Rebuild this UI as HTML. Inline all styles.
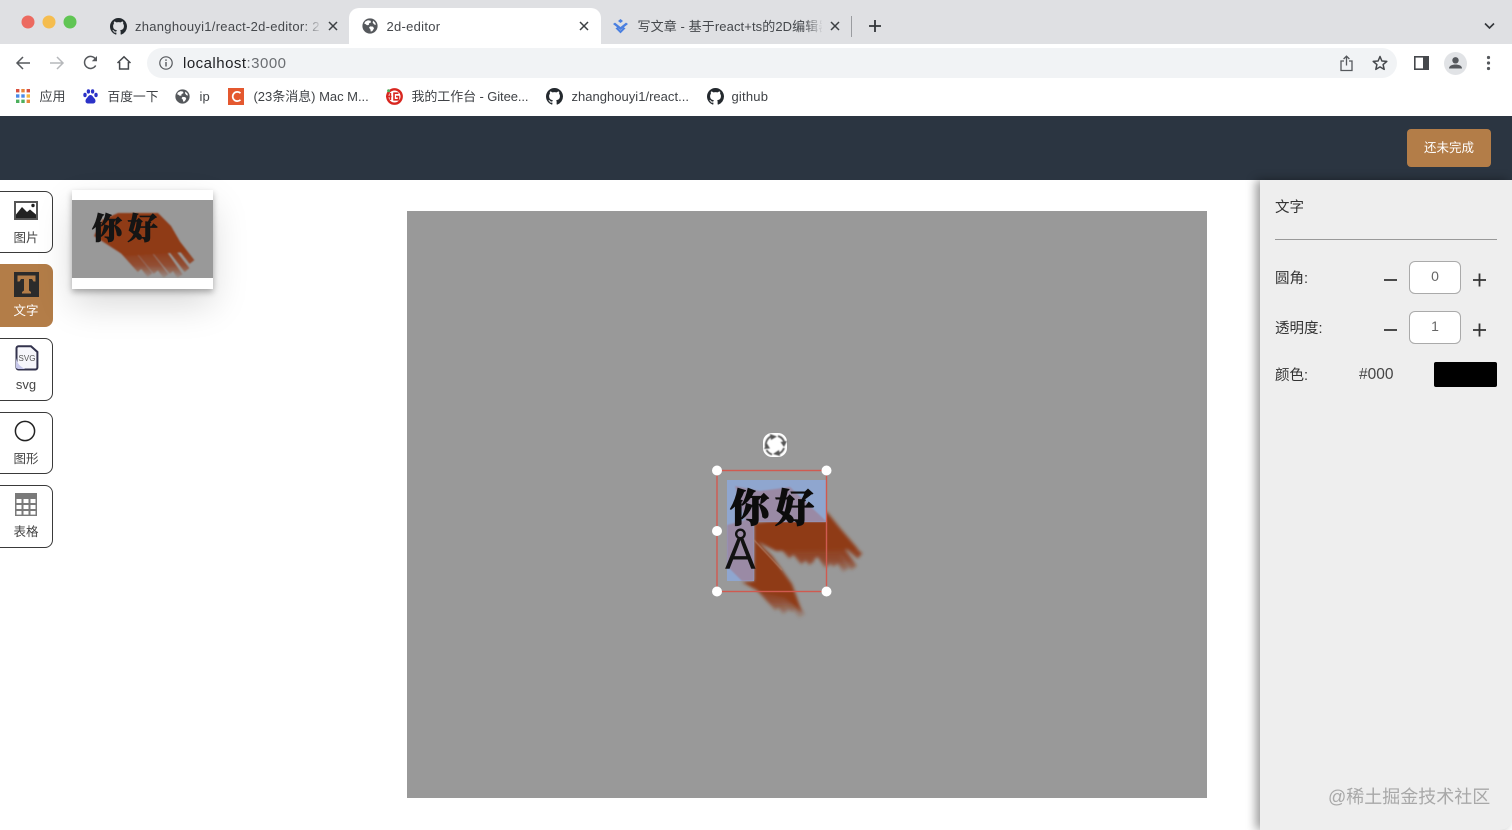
<!DOCTYPE html>
<html lang="zh"><head><meta charset="utf-8"><title>2d-editor</title>
<style>
html,body{margin:0;padding:0;width:1512px;height:830px;overflow:hidden;background:#fff}
body{position:relative;font-family:"Liberation Sans","Noto Sans CJK SC",sans-serif;color:#333}
.a{position:absolute;white-space:nowrap}
svg{position:absolute;overflow:visible}
.t{font-size:13px;color:#45484c;line-height:16px;letter-spacing:.28px}
.b{font-size:13px;color:#3f4246;line-height:16px;letter-spacing:.05px}
.side{position:absolute;left:-8px;width:58.5px;border:1.5px solid #3a3a3a;border-radius:8px;background:#fff;box-sizing:content-box}
.lab{position:absolute;left:0;width:52px;text-align:center;font-size:12.5px;line-height:16px;color:#444}
.p{font-size:14.5px;color:#333;line-height:18px}
.inp{position:absolute;left:1409px;width:50px;height:31px;border:1px solid #aaa;border-radius:6px;background:#fff;text-align:center;font-size:14px;line-height:29px;color:#666}
</style></head>
<body>
<svg width="0" height="0" style="position:absolute"><defs>
<symbol id="gh" viewBox="0 0 16 16"><path fill="#24292e" d="M8 0C3.58 0 0 3.58 0 8c0 3.54 2.29 6.53 5.47 7.59.4.07.55-.17.55-.38 0-.19-.01-.82-.01-1.49-2.01.37-2.53-.49-2.69-.94-.09-.23-.48-.94-.82-1.13-.28-.15-.68-.52-.01-.53.63-.01 1.08.58 1.23.82.72 1.21 1.87.87 2.33.66.07-.52.28-.87.51-1.07-1.78-.2-3.64-.89-3.64-3.95 0-.87.31-1.59.82-2.15-.08-.2-.36-1.02.08-2.12 0 0 .67-.21 2.2.82.64-.18 1.32-.27 2-.27.68 0 1.36.09 2 .27 1.53-1.04 2.2-.82 2.2-.82.44 1.1.16 1.92.08 2.12.51.56.82 1.27.82 2.15 0 3.07-1.87 3.75-3.65 3.95.29.25.54.73.54 1.48 0 1.07-.01 1.93-.01 2.2 0 .21.15.46.55.38A8.013 8.013 0 0016 8c0-4.42-3.58-8-8-8z"/></symbol>
<symbol id="globe" viewBox="0 0 16 16"><circle cx="8" cy="8" r="7.6" fill="#55585c"/><path fill="#fff" d="M3.2 3.6 6 2.2 8.6 2.8 9 4.4 7 5.4 6.8 7 5 7.2 3.4 6 2.2 5.6ZM8 8.4 11 8.6 12 10.4 10.4 13 8.8 13.6 8.4 11.4 7 9.8ZM11.2 2.8 13.4 5 13.8 7 12 6.4 10.6 4.4Z"/></symbol>
<filter id="bl" x="-20%" y="-20%" width="140%" height="140%"><feGaussianBlur stdDeviation="1.5"/></filter>
<filter id="bl2" x="-20%" y="-20%" width="140%" height="140%"><feGaussianBlur stdDeviation=".8"/></filter>
<filter id="bl3" x="-20%" y="-20%" width="140%" height="140%"><feGaussianBlur stdDeviation=".4"/></filter>
<linearGradient id="g1" gradientUnits="userSpaceOnUse" x1="0" y1="545" x2="0" y2="574"><stop offset="0" stop-color="#8f3a18"/><stop offset=".55" stop-color="#8f3a18" stop-opacity=".8"/><stop offset="1" stop-color="#8f3a18" stop-opacity=".15"/></linearGradient>
<linearGradient id="g2" gradientUnits="userSpaceOnUse" x1="0" y1="585" x2="0" y2="618"><stop offset="0" stop-color="#8f3a18"/><stop offset=".5" stop-color="#8f3a18" stop-opacity=".8"/><stop offset="1" stop-color="#8f3a18" stop-opacity=".1"/></linearGradient>
<linearGradient id="g3" gradientUnits="userSpaceOnUse" x1="0" y1="250" x2="0" y2="278"><stop offset="0" stop-color="#8f3a18"/><stop offset=".55" stop-color="#8f3a18" stop-opacity=".8"/><stop offset="1" stop-color="#8f3a18" stop-opacity=".1"/></linearGradient>
</defs></svg>

<!-- tab strip -->
<div class="a" style="left:0;top:0;width:1512px;height:44px;background:#dfe0e3"></div>
<div class="a" style="left:349px;top:8px;width:252px;height:36px;background:#fff;border-radius:10px 10px 0 0"></div>
<svg style="left:0;top:0" width="100" height="44"><circle cx="28" cy="22" r="6.5" fill="#ec6a60"/><circle cx="49" cy="22" r="6.5" fill="#f5bd4f"/><circle cx="70" cy="22" r="6.5" fill="#60c554"/></svg>

<svg style="left:110px;top:18px" width="17" height="17"><use href="#gh" width="17" height="17"/></svg>
<div class="a t" style="left:135px;top:19px;width:185px;overflow:hidden">zhanghouyi1/react-2d-editor: 2D</div>
<div class="a" style="left:304px;top:16px;width:18px;height:20px;background:linear-gradient(90deg,rgba(223,224,227,0),#dfe0e3)"></div>
<svg style="left:328px;top:21px" width="10" height="10"><path d="M1 1 9 9M9 1 1 9" stroke="#3c4043" stroke-width="1.5"/></svg>

<svg style="left:362px;top:18px" width="16" height="16"><use href="#globe" width="16" height="16"/></svg>
<div class="a t" style="left:386.5px;top:19px">2d-editor</div>
<svg style="left:579px;top:21px" width="10" height="10"><path d="M1 1 9 9M9 1 1 9" stroke="#3c4043" stroke-width="1.5"/></svg>

<svg style="left:612px;top:19px" width="17" height="15"><path d="M8.5 0 11 2 8.5 4 6 2Z M1 5 3 3.6 8.5 8 14 3.6 16 5 8.5 11Z M3.5 9.4 5.2 8.2 8.5 11.500 11.8 8.2 13.5 9.4 8.5 14.4Z" fill="#4a7fe0"/></svg>
<div class="a t" style="left:637.5px;top:19px;width:184px;overflow:hidden;letter-spacing:.1px">写文章 - 基于react+ts的2D编辑器</div>
<div class="a" style="left:805px;top:16px;width:18px;height:20px;background:linear-gradient(90deg,rgba(223,224,227,0),#dfe0e3)"></div>
<svg style="left:830px;top:21px" width="10" height="10"><path d="M1 1 9 9M9 1 1 9" stroke="#3c4043" stroke-width="1.5"/></svg>
<div class="a" style="left:851px;top:16px;width:1px;height:21px;background:#9a9ca0"></div>
<svg style="left:868px;top:19px" width="14" height="14"><path d="M7 1V13M1 7H13" stroke="#33363a" stroke-width="1.8"/></svg>
<svg style="left:1484px;top:22px" width="11" height="8"><path d="M1 1.5 5.5 6 10 1.5" fill="none" stroke="#33363a" stroke-width="1.6"/></svg>

<!-- toolbar -->
<div class="a" style="left:0;top:44px;width:1512px;height:72px;background:#fff"></div>
<div class="a" style="left:147px;top:48px;width:1250px;height:30px;background:#f1f3f5;border-radius:15px"></div>
<svg style="left:15px;top:55px" width="16" height="16"><path d="M15 8H2M8 2 2 8 8 14" fill="none" stroke="#55585c" stroke-width="1.5"/></svg>
<svg style="left:49px;top:55px" width="16" height="16"><path d="M1 8H14M8 2 14 8 8 14" fill="none" stroke="#b6b8bb" stroke-width="1.5"/></svg>
<svg style="left:83px;top:55px" width="16" height="16"><path d="M12.7 10.5A6 6 0 1 1 12.6 4.2" fill="none" stroke="#55585c" stroke-width="1.5"/><path d="M14 1V6.2H8.8Z" fill="#55585c"/></svg>
<svg style="left:116px;top:55px" width="16" height="16"><path d="M1.5 8 8 1.8 14.5 8M3.6 7V14H12.4V7" fill="none" stroke="#45484c" stroke-width="1.5"/></svg>
<svg style="left:159px;top:56px" width="14" height="14"><circle cx="7" cy="7" r="6.2" fill="none" stroke="#55585c" stroke-width="1.2"/><path d="M7 6V10.5M7 3.4V4.9" stroke="#55585c" stroke-width="1.4"/></svg>
<div class="a" style="left:183px;top:55px;font-size:15px;line-height:18px;letter-spacing:.48px;color:#202124">localhost<span style="color:#6b6e72">:3000</span></div>
<svg style="left:1340px;top:55px" width="13" height="17"><path d="M4 6H1V15.5H12V6H9M6.5 10.5V1.2M3.6 4 6.5 1.2 9.4 4" fill="none" stroke="#55585c" stroke-width="1.3"/></svg>
<svg style="left:1372px;top:55px" width="16" height="16"><path d="M8 1.5 9.9 6 14.8 6.4 11.1 9.6 12.2 14.4 8 11.9 3.8 14.4 4.9 9.6 1.2 6.4 6.1 6Z" fill="none" stroke="#45484c" stroke-width="1.5" stroke-linejoin="round"/></svg>
<svg style="left:1414px;top:56px" width="15" height="14"><rect x=".8" y=".8" width="13.4" height="12.4" fill="none" stroke="#45484c" stroke-width="1.6"/><rect x="9" y="1" width="5" height="12" fill="#45484c"/></svg>
<svg style="left:1444px;top:52px" width="23" height="23"><circle cx="11.5" cy="11.5" r="11.5" fill="#e1e3e6"/><circle cx="11.5" cy="8.3" r="3.2" fill="#55585c"/><path d="M5 16.5C5 13.4 8.5 12.5 11.5 12.5S18 13.4 18 16.5Z" fill="#55585c"/></svg>
<svg style="left:1486px;top:55px" width="5" height="16"><circle cx="2.5" cy="2.5" r="1.6" fill="#55585c"/><circle cx="2.5" cy="8" r="1.6" fill="#55585c"/><circle cx="2.5" cy="13.5" r="1.6" fill="#55585c"/></svg>

<!-- bookmarks -->
<svg style="left:16px;top:89px" width="14" height="14">
<g><rect x="0" y="0" width="3.4" height="3.4" fill="#d9503f"/><rect x="5.3" y="0" width="3.4" height="3.4" fill="#e8853a"/><rect x="10.6" y="0" width="3.4" height="3.4" fill="#d9503f"/><rect x="0" y="5.3" width="3.4" height="3.4" fill="#4a8ae8"/><rect x="5.3" y="5.3" width="3.4" height="3.4" fill="#4a8ae8"/><rect x="10.6" y="5.3" width="3.4" height="3.4" fill="#f4b83f"/><rect x="0" y="10.6" width="3.4" height="3.4" fill="#4caf5c"/><rect x="5.3" y="10.6" width="3.4" height="3.4" fill="#4caf5c"/><rect x="10.6" y="10.6" width="3.4" height="3.4" fill="#e8853a"/></g></svg>
<div class="a b" style="left:39.5px;top:89px">应用</div>
<svg style="left:83px;top:89px" width="15" height="15" fill="#2b32c8"><ellipse cx="2" cy="6" rx="1.7" ry="2.2"/><ellipse cx="5.4" cy="2.4" rx="1.7" ry="2.2"/><ellipse cx="9.6" cy="2.4" rx="1.7" ry="2.2"/><ellipse cx="13" cy="6" rx="1.7" ry="2.2"/><path d="M7.5 6C5.5 6 5 8 3.5 9.5 2 11 2 14.5 5 14.5H10C13 14.5 13 11 11.5 9.5 10 8 9.5 6 7.5 6Z"/></svg>
<div class="a b" style="left:107.5px;top:89px;font-size:12.7px">百度一下</div>
<svg style="left:175px;top:89px" width="15" height="15"><use href="#globe" width="15" height="15"/></svg>
<div class="a b" style="left:199.5px;top:89px">ip</div>
<div class="a" style="left:228px;top:88px;width:16px;height:17px;background:#e4582f"></div>
<svg style="left:231px;top:91px" width="11" height="11"><path d="M9.5 2.2A4.6 4.6 0 1 0 9.5 8.8" fill="none" stroke="#fff" stroke-width="1.7"/></svg>
<div class="a b" style="left:253.5px;top:89px;letter-spacing:-.02px">(23条消息) Mac M...</div>
<svg style="left:386px;top:88px" width="17" height="17"><circle cx="8.5" cy="8.5" r="7.2" fill="none" stroke="#d8261f" stroke-width="2.4"/><path d="M0 8.5H5.5M4.4 5V12M12.5 5.2H8V11.8H12.5V8.6H10" fill="none" stroke="#d8261f" stroke-width="1.6"/><circle cx="2.6" cy="2.8" r="1.5" fill="#4caf5c"/></svg>
<div class="a b" style="left:411.5px;top:89px;letter-spacing:-.1px">我的工作台 - Gitee...</div>
<svg style="left:546px;top:88px" width="17" height="17"><use href="#gh" width="17" height="17"/></svg>
<div class="a b" style="left:571.5px;top:89px;letter-spacing:.02px">zhanghouyi1/react...</div>
<svg style="left:707px;top:88px" width="17" height="17"><use href="#gh" width="17" height="17"/></svg>
<div class="a b" style="left:731.5px;top:89px;letter-spacing:.2px">github</div>

<!-- header -->
<div class="a" style="left:0;top:116px;width:1512px;height:64px;background:#2b3541"></div>
<div class="a" style="left:1407px;top:129px;width:84px;height:38px;background:#b37d48;border-radius:4px;color:#fff;font-size:12.5px;line-height:39px;text-align:center">还未完成</div>

<!-- sidebar -->
<div class="side" style="top:191px;height:60px"></div>
<svg style="left:14px;top:201px" width="24" height="19"><rect x="1" y="1" width="22" height="17" fill="#fff" stroke="#555" stroke-width="2"/><path d="M2 17V13.500L8 6 13 11 16 8.500 22 13.500V17Z" fill="#222"/><circle cx="19" cy="4.500" r="1.700" fill="#222"/></svg>
<div class="lab" style="top:230px">图片</div>

<div class="side" style="top:264px;height:61px;background:#b37d48;border-color:#b37d48"></div>
<svg style="left:14px;top:272px" width="25" height="25"><rect width="25" height="25" fill="#2b2b2b"/><path d="M3.5 3.5H21.5V9.5H19.5L18 7H15V18.5L17 20V21.5H8V20L10 18.5V7H7L5.5 9.5H3.5Z" fill="#b37d48"/></svg>
<div class="lab" style="top:303px;color:#fff">文字</div>

<div class="side" style="top:338px;height:61px"></div>
<svg style="left:15px;top:345px" width="24" height="26"><path d="M3.500 1.200H16L22.400 7V22.500A2 2 0 0 1 20.400 24.500H3.500A2 2 0 0 1 1.500 22.500V3.200A2 2 0 0 1 3.500 1.200Z" fill="#f6f6fb" stroke="#33334d" stroke-width="2"/><path d="M1 13C3 20 5 21 10 24H3L1 23Z" fill="#c6c7ea"/><text x="12" y="16" text-anchor="middle" font-size="8" fill="#555" font-family="Liberation Sans,sans-serif">SVG</text></svg>
<div class="lab" style="top:377px;font-size:13px">svg</div>

<div class="side" style="top:412px;height:60px"></div>
<svg style="left:14px;top:420px" width="22" height="22"><circle cx="11" cy="11" r="9.600" fill="none" stroke="#222" stroke-width="1.500"/></svg>
<div class="lab" style="top:451px">图形</div>

<div class="side" style="top:485px;height:61px"></div>
<svg style="left:15px;top:493px" width="22" height="23"><rect width="22" height="23" fill="#7a7a7a"/><g fill="#fff"><rect x="1.500" y="6" width="5" height="4"/><rect x="8.500" y="6" width="5" height="4"/><rect x="15.500" y="6" width="5" height="4"/><rect x="1.500" y="12" width="5" height="4"/><rect x="8.500" y="12" width="5" height="4"/><rect x="15.500" y="12" width="5" height="4"/><rect x="1.500" y="18" width="5" height="3.600"/><rect x="8.500" y="18" width="5" height="3.600"/><rect x="15.500" y="18" width="5" height="3.600"/></g></svg>
<div class="lab" style="top:524px">表格</div>

<!-- thumbnail -->
<div class="a" style="left:72px;top:190px;width:141px;height:99px;background:#fff;box-shadow:0 3px 6px rgba(0,0,0,.3),0 16px 36px rgba(0,0,0,.15)"></div>
<div class="a" style="left:72px;top:200px;width:141px;height:78px;background:#999;overflow:hidden">
<svg style="left:-72px;top:-200px" width="300" height="300"><g filter="url(#bl2)">
<path fill="#8f3a18" d="M94 236 102 220 118 213 158 213 171 226 186 252 125 256Z"/>
<g fill="none" stroke="url(#g3)" stroke-width="6">
<path d="M122 250 140 270M130 250 150 275M138 250 156 272M146 250 166 276M154 250 172 272M162 250 180 276M170 248 187 270M178 244 192 262"/>
</g></g></svg>
<div class="a" style="left:20px;top:8px;font-family:'Noto Serif CJK SC','Noto Sans CJK SC',serif;font-weight:900;font-size:30px;line-height:36px;color:#151515;-webkit-text-stroke:.8px #151515;letter-spacing:5.500px">你好</div>
</div>

<!-- canvas -->
<div class="a" style="left:407px;top:211px;width:800px;height:587px;background:#999"></div>
<svg style="left:0;top:0" width="1512" height="830">
<g filter="url(#bl)">
<path fill="#8f3a18" d="M754 523 827 512 840 528 858 549 776 551 754 540Z"/>
<g fill="none" stroke="url(#g1)" stroke-width="7">
<path d="M782 545 792 556M790 545 804 562M798 545 812 563M806 545 816 558M814 545 828 566M822 545 836 565M830 545 846 570M838 545 854 568M846 544 860 556"/>
</g>
<path fill="#8f3a18" d="M754 538 772 556 792 584 802 612 785 598 760 592 742 582 754 581Z"/>
<g fill="none" stroke="url(#g2)" stroke-width="7">
<path d="M756 584 778 608M764 584 786 612M772 584 794 610M780 584 802 616"/>
</g>
</g>
<path d="M727 480H827V522H754V581H727Z" fill="#8fa6cf"/>
<path d="M735 486 760 491 790 487 827 522H754V581H742L727 566V525L745 520Z" fill="#9a8aa5" filter="url(#bl2)"/>
<rect x="717" y="470.500" width="109.500" height="121" fill="none" stroke="#d05a50" stroke-width="1.400"/>
<path d="M754 540 782 570" stroke="#b88a72" stroke-width=".8" filter="url(#bl3)"/>
<g fill="#fff"><circle cx="717" cy="470.500" r="5"/><circle cx="826.500" cy="470.500" r="5"/><circle cx="717" cy="531" r="5"/><circle cx="717" cy="591.500" r="5"/><circle cx="826.500" cy="591.500" r="5"/></g>
<rect x="763" y="433" width="24" height="24" rx="9" fill="#fff"/>
<g filter="url(#bl3)"><g fill="none" stroke="#555" stroke-width="1.800"><path d="M766 447A9.500 9.500 0 0 1 772 436"/><path d="M778 436A9.500 9.500 0 0 1 784.500 443"/><path d="M784 448A9.500 9.500 0 0 1 778 454"/><path d="M772 454.500A9.500 9.500 0 0 1 766.500 450"/></g>
<g fill="#555"><path d="M770 434 777 436.500 771 440Z"/><path d="M787 441 784 447 780.500 442Z"/><path d="M780 456 773 454 779 450Z"/><path d="M764 449 767 443.500 770 448.500Z"/></g></g>
</svg>
<div class="a" style="left:730px;top:484px;font-family:'Noto Serif CJK SC','Noto Sans CJK SC',serif;font-weight:900;font-size:39px;line-height:44px;color:#0c0c0c;-webkit-text-stroke:1px #0c0c0c;letter-spacing:6px">你好</div>
<div class="a" style="left:725px;top:525px;font-size:46px;line-height:56px;color:#111">Å</div>

<!-- right panel -->
<div class="a" style="left:1260px;top:180px;width:252px;height:650px;background:#eeeeee;box-shadow:-4px 0 10px rgba(0,0,0,.4);border-radius:0 0 12px 0"></div>
<div class="a p" style="left:1275px;top:199px">文字</div>
<div class="a" style="left:1275px;top:239px;width:222px;height:1.300px;background:#999"></div>
<div class="a p" style="left:1275px;top:270px">圆角:</div>
<div class="a p" style="left:1275px;top:320px">透明度:</div>
<div class="a p" style="left:1275px;top:367px">颜色:</div>
<svg style="left:1383px;top:272px" width="104" height="66"><path d="M1 8H14M1 58H14" stroke="#333" stroke-width="1.800"/><path d="M90 8H103M96.500 1.500V14.500M90 58H103M96.500 51.500V64.500" stroke="#333" stroke-width="1.800"/></svg>
<div class="inp" style="top:261px">0</div>
<div class="inp" style="top:311px">1</div>
<div class="a" style="left:1359px;top:366px;font-size:15.500px;line-height:18px;color:#444">#000</div>
<div class="a" style="left:1434px;top:362px;width:63px;height:25px;background:#000;border-radius:2px"></div>
<div class="a" style="left:1328px;top:786px;font-size:18px;line-height:22px;color:#a8a8a8">@稀土掘金技术社区</div>
</body></html>
